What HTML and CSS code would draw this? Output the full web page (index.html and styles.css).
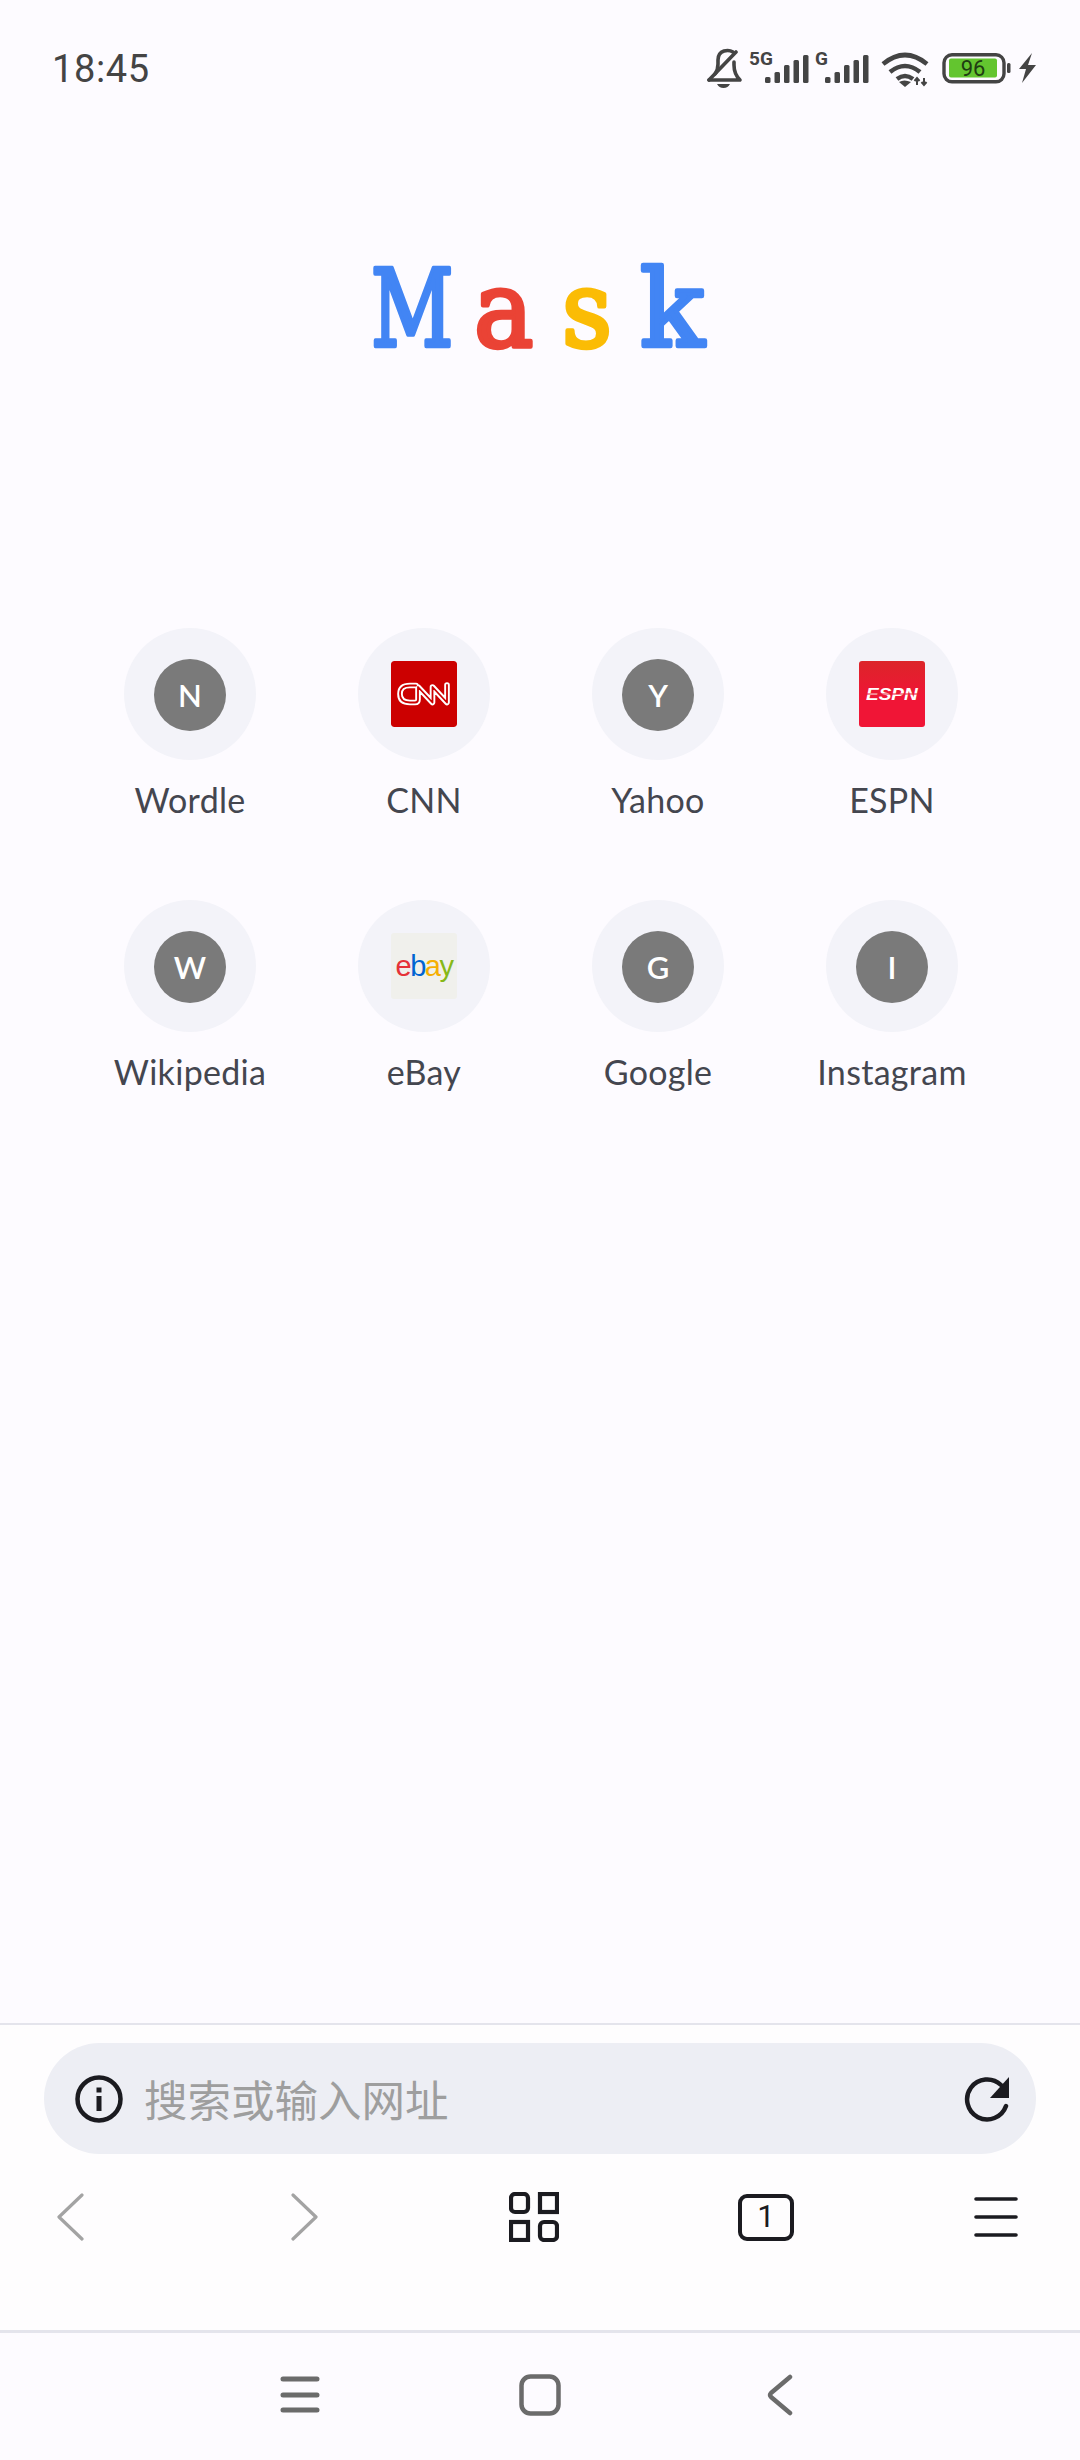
FILE: index.html
```html
<!DOCTYPE html>
<html lang="zh">
<head>
  <meta charset="UTF-8" />
  <meta name="viewport" content="width=device-width, initial-scale=1.0"/>
  <title>Mask</title>
  <link rel="stylesheet" href="styles.css">
</head>
<body>
  <div class="status-bar">
    <span class="time">18:45</span>
    <svg class="status-icons" width="330" height="50" viewBox="707 44 330 50">
      <!-- muted bell -->
      <g fill="none" stroke="#444" stroke-width="3.6" stroke-linecap="round" stroke-linejoin="round">
        <path d="M715 74q3-4 3-10v-4q0-7 6-9 5-1.500 9 1"/>
        <path d="M734 62v3q0 9 6 15h-31"/>
        <path d="M709 80 736 52"/>
      </g>
      <path d="M717 84h13q-2 4-6.500 4t-6.500-4z" fill="#444"/>
      <text class="net" x="749" y="65">5G</text>
      <g id="bars" fill="#444">
        <rect x="765" y="77" width="5.500" height="6" rx="1.500"/>
        <rect x="774.500" y="72" width="5.500" height="11" rx="1.500"/>
        <rect x="784" y="65" width="5.500" height="18" rx="1.500"/>
        <rect x="793.500" y="60" width="5.500" height="23" rx="1.500"/>
        <rect x="803" y="55" width="5.500" height="28" rx="1.500"/>
      </g>
      <text class="net" x="815" y="65">G</text>
      <use href="#bars" x="60"/>
      <!-- wifi -->
      <g fill="none" stroke="#444" stroke-width="4.600">
        <path d="M883 64q22-18 44 0"/>
        <path d="M890 72q15-12 30 0"/>
        <path d="M897 79q8-6 16 0"/>
      </g>
      <path d="M899 82q5-3 12 0l-6 5z" fill="#444"/>
      <path d="M917 85v-6M914.500 81l2.500-3 2.500 3M924 78v6M921.500 82l2.500 3 2.500-3" fill="none" stroke="#444" stroke-width="2"/>
      <!-- battery -->
      <rect x="944" y="54.800" width="60" height="27" rx="8" fill="none" stroke="#444" stroke-width="3.400"/>
      <rect x="949" y="58.500" width="48" height="19" rx="2" fill="#63c52f"/>
      <text class="batt" x="973" y="75.500" text-anchor="middle">96</text>
      <rect x="1007" y="63" width="3.500" height="10" rx="1.500" fill="#444"/>
      <path d="M1032 53 1019 69h7l-4 14 14-18h-8l4-12z" fill="#444"/>
    </svg>
  </div>

  <svg class="logo" width="1080" height="130" viewBox="0 240 1080 130">
    <text class="logo-blue" transform="translate(371 346) scale(.76 1)">M</text>
    <text class="logo-red" transform="translate(474 346) scale(.94 1)">a</text>
    <text class="logo-yellow" transform="translate(562 346) scale(.92 1)">s</text>
    <text class="logo-blue" transform="translate(640 346) scale(1 1)">k</text>
  </svg>

  <div class="tiles">
    <div class="tile">
      <div class="tile-disc"><div class="letter">N</div></div>
      <div class="tile-label">Wordle</div>
    </div>
    <div class="tile">
      <div class="tile-disc">
        <svg class="favicon" width="66" height="66" viewBox="0 0 66 66">
          <rect width="66" height="66" rx="3" fill="#cc0000"/>
          <g fill="none" stroke-linejoin="round" stroke-linecap="round">
            <path stroke="#fff" stroke-width="5.600" d="M25 24.500H19q-10 0-10 8.500t10 8.500h5q3 0 3-3V26l14.500 15.500V26L56 41.500V24"/>
            <path stroke="#cc0000" stroke-width="1.800" d="M25 24.500H19q-10 0-10 8.500t10 8.500h5q3 0 3-3V26l14.500 15.500V26L56 41.500V24"/>
          </g>
        </svg>
      </div>
      <div class="tile-label">CNN</div>
    </div>
    <div class="tile">
      <div class="tile-disc"><div class="letter">Y</div></div>
      <div class="tile-label">Yahoo</div>
    </div>
    <div class="tile">
      <div class="tile-disc">
        <svg class="favicon espn" width="66" height="66" viewBox="0 0 66 66">
          <text transform="translate(7 39) scale(1.120 1)">ESPN</text>
          <rect x="6" y="32.500" width="54" height="1" fill="#ea1c33"/>
        </svg>
      </div>
      <div class="tile-label">ESPN</div>
    </div>
    <div class="tile">
      <div class="tile-disc"><div class="letter">W</div></div>
      <div class="tile-label">Wikipedia</div>
    </div>
    <div class="tile">
      <div class="tile-disc">
        <div class="favicon ebay"><span class="eb-e">e</span><span class="eb-b">b</span><span class="eb-a">a</span><span class="eb-y">y</span></div>
      </div>
      <div class="tile-label">eBay</div>
    </div>
    <div class="tile">
      <div class="tile-disc"><div class="letter">G</div></div>
      <div class="tile-label">Google</div>
    </div>
    <div class="tile">
      <div class="tile-disc"><div class="letter">I</div></div>
      <div class="tile-label">Instagram</div>
    </div>
  </div>

  <div class="toolbar">
    <div class="search-bar">
      <svg width="48" height="48" viewBox="0 0 48 48">
        <circle cx="24" cy="24" r="21.500" fill="none" stroke="#1b1b20" stroke-width="4.500"/>
        <rect x="21.500" y="21" width="5" height="15" fill="#1b1b20"/>
        <rect x="21.500" y="12.500" width="5" height="5" fill="#1b1b20"/>
      </svg>
      <span class="search-text">搜索或输入网址</span>
      <svg class="reload" width="46" height="46" viewBox="0 0 46 46">
        <path d="M38 9A20 20 0 1 0 43 30" fill="none" stroke="#1b1b20" stroke-width="4.500" stroke-linecap="round"/>
        <path d="M46 1v21H27z" fill="#1b1b20"/>
      </svg>
    </div>
    <div class="nav-row">
      <svg width="28" height="50" viewBox="0 0 28 50"><path d="M26 3 3 25l23 22" fill="none" stroke="#a3a3a3" stroke-width="3.200" stroke-linecap="round" stroke-linejoin="round"/></svg>
      <svg width="28" height="50" viewBox="0 0 28 50"><path d="M2 3l23 22L2 47" fill="none" stroke="#a3a3a3" stroke-width="3.200" stroke-linecap="round" stroke-linejoin="round"/></svg>
      <svg width="50" height="50" viewBox="0 0 50 50">
        <g fill="none" stroke="#1b1b20" stroke-width="4.200">
          <rect x="2" y="2" width="17" height="18" rx="4"/>
          <rect x="31" y="2" width="17" height="18"/>
          <rect x="2" y="30" width="17" height="18"/>
          <rect x="31" y="30" width="17" height="18" rx="4"/>
        </g>
      </svg>
      <div class="tab-count">1</div>
      <svg width="44" height="42" viewBox="0 0 44 42">
        <path d="M2 3h40M2 21h40M2 39h40" fill="none" stroke="#1b1b20" stroke-width="3.600" stroke-linecap="round"/>
      </svg>
    </div>
  </div>

  <div class="system-nav">
    <svg width="40" height="38" viewBox="0 0 40 38">
      <path d="M3 3h34M3 19h34M3 34h34" fill="none" stroke="#6b6b6b" stroke-width="5" stroke-linecap="round"/>
    </svg>
    <svg width="42" height="42" viewBox="0 0 42 42">
      <rect x="2.500" y="2.500" width="37" height="37" rx="9" fill="none" stroke="#6b6b6b" stroke-width="4.500"/>
    </svg>
    <svg width="26" height="42" viewBox="0 0 26 42">
      <path d="M23 3 4 19q-2 2 0 4l19 16" fill="none" stroke="#6b6b6b" stroke-width="4.500" stroke-linecap="round" stroke-linejoin="round"/>
    </svg>
  </div>
</body>
</html>
```

FILE: styles.css
```css
body {
  margin: 0;
  width: 1080px;
  height: 2460px;
  background-color: #fdfbff;
  font-family: "Lato", "Noto Sans CJK SC", sans-serif;
  display: flex;
  flex-direction: column;
  overflow: hidden;
}

.status-bar {
  display: flex;
  justify-content: space-between;
  align-items: center;
  height: 50px;
  padding: 44px 43px 0 52px;
}

.time {
  font-family: "Roboto", sans-serif;
  font-size: 38px;
  font-weight: 450;
  letter-spacing: 0.6px;
  color: #444;
}

.status-icons text {
  fill: #444;
}

.status-icons .net {
  font-family: "Roboto", sans-serif;
  font-size: 19px;
  font-weight: 700;
}

.status-icons .batt {
  fill: #1f3d12;
  font-family: "Roboto", sans-serif;
  font-size: 22px;
}

.logo {
  display: block;
  margin-top: 146px;
}

.logo text {
  font-family: "DejaVu Serif", serif;
  font-size: 106px;
  stroke-width: 4.500px;
  stroke-linejoin: round;
}

.logo-blue { fill: #4285f4; stroke: #4285f4; }
.logo-red { fill: #ea4335; stroke: #ea4335; }
.logo-yellow { fill: #fbbc05; stroke: #fbbc05; }

.tiles {
  display: grid;
  grid-template-columns: repeat(4, 234px);
  row-gap: 80px;
  margin-top: 258px;
  padding-left: 73px;
}

.tile {
  display: flex;
  flex-direction: column;
  align-items: center;
  height: 192px;
}

.tile-disc {
  width: 132px;
  height: 132px;
  border-radius: 50%;
  background-color: #f3f3f9;
  display: flex;
  justify-content: center;
  align-items: center;
}

.letter {
  width: 72px;
  height: 72px;
  margin-top: 2px;
  border-radius: 50%;
  background-color: #7a7a7a;
  color: #fff;
  font-size: 31px;
  font-weight: 600;
  line-height: 72px;
  text-align: center;
}

.tile-label {
  margin-top: 20px;
  font-size: 34px;
  line-height: 40px;
  letter-spacing: 0.3px;
  color: #44464f;
  white-space: nowrap;
}

.favicon {
  width: 66px;
  height: 66px;
  border-radius: 3px;
  display: flex;
  justify-content: center;
  align-items: center;
}

.espn {
  background: linear-gradient(#dc2529, #f01536 55%);
}

.espn text {
  fill: #fff;
  font-family: "Liberation Sans", sans-serif;
  font-size: 17px;
  font-weight: 700;
  font-style: italic;
}

.ebay {
  background-color: #f0f0ec;
  font-family: "Liberation Sans", sans-serif;
  font-size: 29px;
  letter-spacing: -1.500px;
}

.eb-e { color: #e53238; }
.eb-b { color: #0064d2; }
.eb-a { color: #f5af02; }
.eb-y { color: #86b817; }

.toolbar {
  margin-top: auto;
  height: 305px;
  border-top: 2px solid #e4e4ec;
  background-color: #fefdfe;
}

.search-bar {
  display: flex;
  align-items: center;
  height: 111px;
  margin: 18px 44px 0;
  padding: 0 27px 0 31px;
  border-radius: 56px;
  background-color: #edeef4;
}

.search-text {
  margin-left: 21px;
  font-size: 43.5px;
  color: #9e9e9e;
}

.reload {
  margin-left: auto;
}

.nav-row {
  display: grid;
  grid-template-columns: 140px 330px 128px 336px 124px;
  justify-items: center;
  align-items: center;
  padding-top: 38px;
}

.tab-count {
  box-sizing: border-box;
  width: 56px;
  height: 47px;
  border: 4.500px solid #1b1b20;
  border-radius: 9px;
  color: #1b1b20;
  font-family: "Roboto", sans-serif;
  font-size: 31px;
  line-height: 38px;
  text-align: center;
}

.system-nav {
  display: grid;
  grid-template-columns: repeat(3, 240px);
  justify-content: center;
  justify-items: center;
  align-items: center;
  height: 123px;
  padding-bottom: 4px;
  border-top: 3px solid #e4e4ec;
}
```
